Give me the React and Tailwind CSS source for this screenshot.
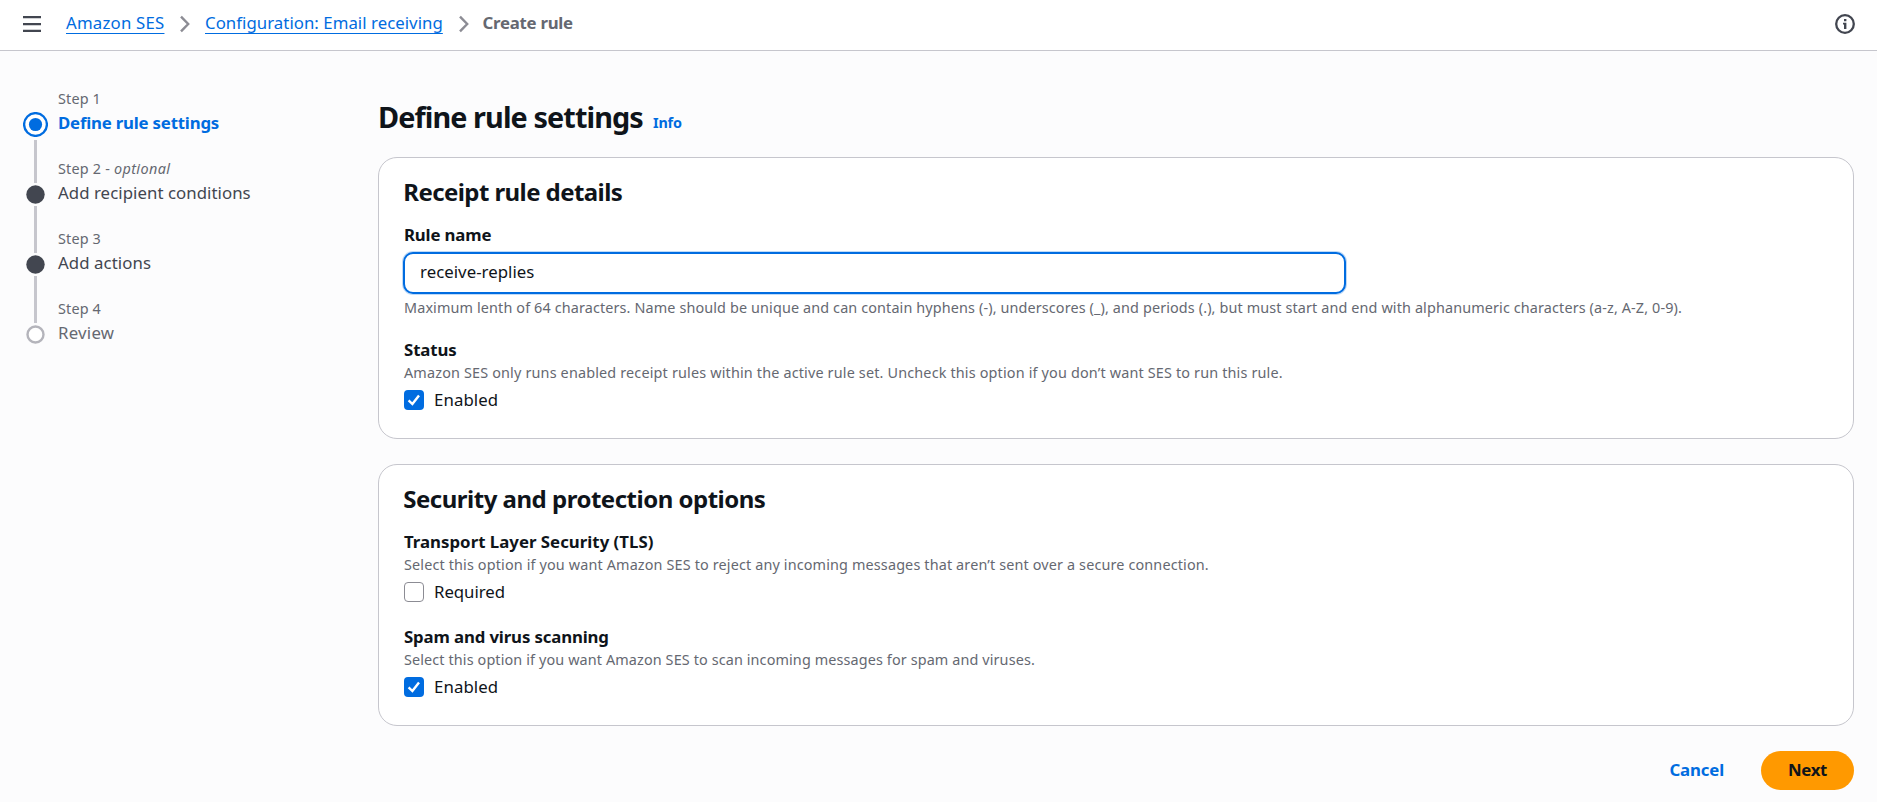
import { useState } from "react";

const bodyText = "text-[16.8px] leading-[25px]";
const hintText = "text-[14.4px] leading-[21px] text-[#656871] whitespace-nowrap";

function Chevron() {
  return (
    <svg width="12" height="18" viewBox="0 0 12 18" fill="none" className="mt-[5px] shrink-0">
      <path d="M2 1.6 L9.2 9 L2 16.4" stroke="#8c8c94" strokeWidth="2.4" />
    </svg>
  );
}

function Header() {
  const link =
    "text-[#006ce0] underline decoration-1 underline-offset-[4px] [text-decoration-skip-ink:none]";
  return (
    <header className="flex h-[51px] items-start border-b border-[#c6c6cd] bg-white pt-[10px] pr-[22px] pl-[23px]">
      <button aria-label="Open navigation" className="mt-[6px] mr-[25px] block w-[18px]">
        <svg width="18" height="16" viewBox="0 0 18 16" className="block">
          <path d="M0 0h18v2.3H0zM0 6.9h18v2.3H0zM0 13.7h18v2.3H0z" fill="#424650" />
        </svg>
      </button>
      <nav className={`flex items-start ${bodyText}`}>
        <a href="#ses" className={`mr-[14px] w-[99px] tracking-[0.21px] whitespace-nowrap ${link}`}>Amazon SES</a>
        <Chevron />
        <a href="#email" className={`ml-[14px] mr-[15px] w-[238px] tracking-[0.04px] whitespace-nowrap ${link}`}>
          Configuration: Email receiving
        </a>
        <Chevron />
        <span className="ml-[12.5px] font-bold tracking-[-0.25px] text-[#656871]">Create rule</span>
      </nav>
      <button aria-label="Info" className="mt-[4px] ml-auto">
        <svg width="20" height="20" viewBox="0 0 20 20" fill="none" className="block">
          <circle cx="10" cy="10" r="8.8" stroke="#424650" strokeWidth="2.3" />
          <path d="M9 5h2.4v2.3H9zM8 8.8h3.4V15H9v-4.4H8z" fill="#424650" />
        </svg>
      </button>
    </header>
  );
}

function Dot({ outline }) {
  return (
    <svg width="19" height="19" viewBox="0 0 19 19" className="block">
      {outline ? (
        <circle cx="9.5" cy="9.5" r="8" fill="#fff" stroke="#b4b4bb" strokeWidth="2.4" />
      ) : (
        <circle cx="9.5" cy="9.5" r="9.2" fill="#424650" />
      )}
    </svg>
  );
}

function Steps() {
  return (
    <aside className="flex w-[355px] shrink-0 gap-[10px] pt-[37px]">
      <div className="flex w-[25px] flex-col items-center pt-[24px]">
        <svg width="25" height="25" viewBox="0 0 25 25" className="block">
          <circle cx="12.5" cy="12.5" r="11.4" fill="#fff" stroke="#006ce0" strokeWidth="2.3" />
          <circle cx="12.5" cy="12.5" r="6.6" fill="#006ce0" />
        </svg>
        <span className="mt-[3px] mb-[2px] h-[43px] w-[3px] bg-[#c6c6cd]" />
        <Dot />
        <span className="my-[2px] h-[47px] w-[3px] bg-[#c6c6cd]" />
        <Dot />
        <span className="my-[2px] h-[47px] w-[3px] bg-[#c6c6cd]" />
        <Dot outline />
      </div>
      <ol className="flex flex-col gap-[23px]">
        <li>
          <div className={`mb-px tracking-[0.15px] ${hintText}`}>Step 1</div>
          <div className={`font-bold tracking-[-0.19px] text-[#006ce0] ${bodyText}`}>Define rule settings</div>
        </li>
        <li>
          <div className={`mb-px tracking-[0.2px] ${hintText}`}>
            Step 2 - <i className="tracking-[0.4px]">optional</i>
          </div>
          <div className={`tracking-[0.06px] text-[#424650] ${bodyText}`}>Add recipient conditions</div>
        </li>
        <li>
          <div className={`mb-px tracking-[0.15px] ${hintText}`}>Step 3</div>
          <div className={`tracking-[0.08px] text-[#424650] ${bodyText}`}>Add actions</div>
        </li>
        <li>
          <div className={`mb-px tracking-[0.15px] ${hintText}`}>Step 4</div>
          <div className={`tracking-[0.25px] text-[#656871] ${bodyText}`}>Review</div>
        </li>
      </ol>
    </aside>
  );
}

function Checkbox({ label, initial, tracking }) {
  const [checked, setChecked] = useState(initial);
  return (
    <button
      role="checkbox"
      aria-checked={checked}
      onClick={() => setChecked(!checked)}
      className="mt-[4px] flex items-start gap-[10px]"
    >
      {checked ? (
        <span className="mt-[3px] size-[20px] rounded-[4px] bg-[#006ce0]">
          <svg width="20" height="20" viewBox="0 0 20 20" fill="none" className="block">
            <path d="M4.6 10.4 L8.4 14 L15 5.6" stroke="#fff" strokeWidth="2.4" />
          </svg>
        </span>
      ) : (
        <span className="mt-[3px] size-[20px] rounded-[4px] border border-[#8c8c94] bg-white" />
      )}
      <span className={`${bodyText} ${tracking}`}>{label}</span>
    </button>
  );
}

function Card({ title, height, tracking, children }) {
  return (
    <section className={`rounded-[19px] border border-[#c6c6cd] bg-white pt-[17px] pl-[25px] ${height}`}>
      <h2 className={`mb-[14px] ml-[-0.7px] text-[24px] leading-[33px] font-bold ${tracking}`}>{title}</h2>
      {children}
    </section>
  );
}

export default function App() {
  const [name, setName] = useState("receive-replies");
  return (
    <div className="h-[802px] overflow-hidden bg-[#fcfcfd] font-['Noto_Sans','Liberation_Sans',sans-serif] text-[#0f141a]">
      <Header />
      <div className="flex pr-[23px] pl-[23px]">
        <Steps />
        <main className="min-w-0 grow pt-[46px]">
          <div className="flex items-baseline">
            <h1 className="w-[275px] text-[28.8px] leading-[39px] font-bold tracking-[-0.9px] whitespace-nowrap">
              Define rule settings
            </h1>
            <a href="#info" className="text-[14.4px] leading-[21px] font-bold tracking-[-0.2px] text-[#006ce0]">Info</a>
          </div>

          <div className="mt-[21px] flex flex-col gap-[25px]">
            <Card title="Receipt rule details" height="h-[282px]" tracking="tracking-[-0.58px]">
              <div className={`font-bold tracking-[-0.15px] ${bodyText}`}>Rule name</div>
              <input
                value={name}
                onChange={(e) => setName(e.target.value)}
                className={`mt-[5px] ml-[-1px] block h-[42px] w-[943px] rounded-[10px] border-2 border-[#006ce0] bg-white pr-4 pb-[4px] pl-[15px] tracking-[0.04px] shadow-[0_0_0_1px_rgba(0,108,224,0.25)] outline-none ${bodyText}`}
              />
              <div className={`mt-[3px] tracking-[0.126px] ${hintText}`}>
                Maximum lenth of 64 characters. Name should be unique and can contain hyphens (-), underscores (_), and periods (.), but must start and end with alphanumeric characters (a-z, A-Z, 0-9).
              </div>
              <div className={`mt-[19px] font-bold tracking-[-0.1px] ${bodyText}`}>Status</div>
              <div className={`tracking-[0.165px] ${hintText}`}>
                Amazon SES only runs enabled receipt rules within the active rule set. Uncheck this option if you don’t want SES to run this rule.
              </div>
              <Checkbox label="Enabled" initial={true} tracking="tracking-[0.1px]" />
            </Card>

            <Card title="Security and protection options" height="h-[262px]" tracking="tracking-[-0.5px]">
              <div className={`font-bold tracking-[0.02px] ${bodyText}`}>Transport Layer Security (TLS)</div>
              <div className={`tracking-[0.144px] ${hintText}`}>
                Select this option if you want Amazon SES to reject any incoming messages that aren’t sent over a secure connection.
              </div>
              <Checkbox label="Required" initial={false} tracking="tracking-[-0.05px]" />
              <div className={`mt-[20px] font-bold tracking-[-0.13px] ${bodyText}`}>Spam and virus scanning</div>
              <div className={`tracking-[0.12px] ${hintText}`}>
                Select this option if you want Amazon SES to scan incoming messages for spam and viruses.
              </div>
              <Checkbox label="Enabled" initial={true} tracking="tracking-[0.1px]" />
            </Card>
          </div>

          <div className={`mt-[25px] flex justify-end font-bold ${bodyText}`}>
            <button className="mr-[37px] flex h-[39px] items-start pt-[6px] tracking-[-0.15px] text-[#006ce0]">Cancel</button>
            <button className="flex h-[39px] w-[93px] items-start justify-center rounded-full bg-[#ff9900] pt-[6px] tracking-[-0.3px]">Next</button>
          </div>
        </main>
      </div>
    </div>
  );
}
